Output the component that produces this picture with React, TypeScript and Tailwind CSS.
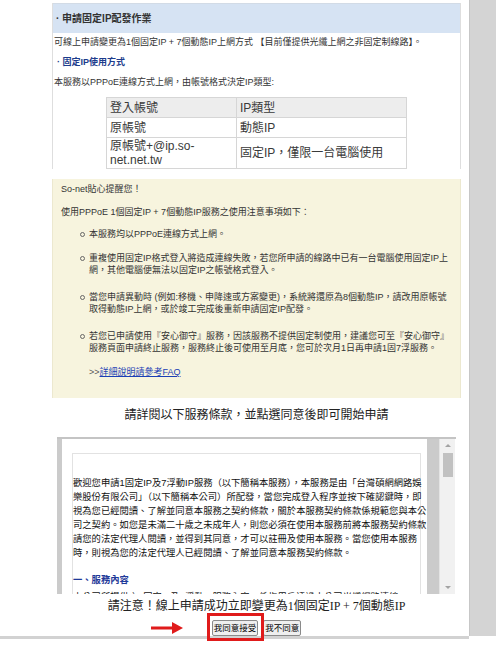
const sans = "font-['Liberation_Sans','Noto_Sans_CJK_TC',sans-serif]";
const serif = "font-['Liberation_Serif','Noto_Sans_CJK_TC',serif]";

const notices = [
  { text: ['本服務均以PPPoE連線方式上網。'], gap: 'mt-[10px]' },
  {
    text: [
      '重複使用固定IP格式登入將造成連線失敗，若您所申請的線路中已有一台電腦使用固定IP上',
      '網，其他電腦便無法以固定IP之帳號格式登入。',
    ],
    gap: 'mt-[12px]',
  },
  {
    text: [
      '當您申請異動時 (例如:移機、申降速或方案變更)，系統將還原為8個動態IP，請改用原帳號',
      '取得動態IP上網，或於竣工完成後重新申請固定IP配發。',
    ],
    gap: 'mt-[15px]',
  },
  {
    text: [
      '若您已申請使用『安心御守』服務，因該服務不提供固定制使用，建議您可至『安心御守』',
      '服務頁面申請終止服務，服務終止後可使用至月底，您可於次月1日再申請1固7浮服務。',
    ],
    gap: 'mt-[15px]',
  },
];

const terms = [
  '歡迎您申請1固定IP及7浮動IP服務（以下簡稱本服務），本服務是由「台灣碩網網路娛',
  '樂股份有限公司」（以下簡稱本公司）所配發，當您完成登入程序並按下確認鍵時，即',
  '視為您已經閱讀、了解並同意本服務之契約條款，關於本服務契約條款係規範您與本公',
  '司之契約。如您是未滿二十歲之未成年人，則您必須在使用本服務前將本服務契約條款',
  '請您的法定代理人閱讀，並得到其同意，才可以註冊及使用本服務。當您使用本服務',
  '時，則視為您的法定代理人已經閱讀、了解並同意本服務契約條款。',
];

function Lines({ lines }: { lines: string[] }) {
  return (
    <>
      {lines.map((l) => (
        <span key={l} className="block whitespace-nowrap">
          {l}
        </span>
      ))}
    </>
  );
}

export default function App() {
  return (
    <div className={`w-[496px] h-[664px] bg-white text-[#333] text-[9px] leading-[12px] ${sans}`}>
      <div className="flex h-[636px]">
        <div className="w-[469px] pt-[3px] pl-[52px] pr-[8px]">
          {/* application panel */}
          <section className="border-x border-[#dedede]">
            <div className="h-[30px] bg-[#d6e3f3] border-t border-[#d2dbe6] flex items-center pl-[3px] text-[10px] font-bold text-[#333]">
              · 申請固定IP配發作業
            </div>
            <p className="pl-[1px] pt-[3px] whitespace-nowrap">
              可線上申請變更為1個固定IP + 7個動態IP上網方式 【目前僅提供光纖上網之非固定制線路】。
            </p>
            <p className="pl-[4px] mt-[8px] font-bold text-[#1d3c8c]">· 固定IP使用方式</p>
            <p className="pl-[1px] mt-[8px]">本服務以PPPoE連線方式上網，由帳號格式決定IP類型:</p>
            <table className="ml-[53px] mt-[9px] mb-[10px] w-[301px] border-collapse border border-[#cfcfcf] text-[12px] leading-[14px] text-[#3a3a3a]">
              <tbody>
                <tr className="h-[20px] bg-[#ededed]">
                  <td className="w-[130px] border border-[#d6d6d6] pl-[3px]">登入帳號</td>
                  <td className="border border-[#d6d6d6] pl-[3px]">IP類型</td>
                </tr>
                <tr className="h-[20px]">
                  <td className="border border-[#d6d6d6] pl-[3px]">原帳號</td>
                  <td className="border border-[#d6d6d6] pl-[3px]">動態IP</td>
                </tr>
                <tr className="h-[31px]">
                  <td className="border border-[#d6d6d6] pl-[3px] break-all">
                    原帳號+@ip.so-
                    <br />
                    net.net.tw
                  </td>
                  <td className="border border-[#d6d6d6] pl-[3px]">固定IP，僅限一台電腦使用</td>
                </tr>
              </tbody>
            </table>
          </section>

          {/* reminder box */}
          <section className="bg-[#f7f4de] border-x border-[#ece8cf] pl-[8px] pt-[4px] pb-[20px]">
            <p>So-net貼心提醒您！</p>
            <p className="mt-[11px]">使用PPPoE 1個固定IP + 7個動態IP服務之使用注意事項如下：</p>
            <ul>
              {notices.map((n) => (
                <li key={n.text[0]} className={`${n.gap} flex`}>
                  <span className="w-[28px] flex justify-end pr-[4px] pt-[4px]">
                    <span className="block w-[5px] h-[5px] rounded-full border border-[#666]" />
                  </span>
                  <div>
                    <Lines lines={n.text} />
                  </div>
                </li>
              ))}
            </ul>
            <p className="mt-[12px] pl-[28px]">
              <span className="text-[#555]">&gt;&gt;</span>
              <a href="#faq" className="text-[#1a3fb5] underline">
                詳細說明請參考FAQ
              </a>
            </p>
          </section>

          <h2 className={`mt-[9px] text-center text-[12px] leading-[16px] text-[#222] ${serif}`}>
            請詳閱以下服務條款，並點選同意後即可開始申請
          </h2>

          {/* terms frame */}
          <div className="mx-[5px] mt-[14px] h-[157px] flex border-t-2 border-[#c4c4c4]">
            <div className="w-[5px] bg-[#cbcbcb]" />
            <div className="w-[365px] overflow-hidden pl-[10px] pr-[6px] pt-[14px]">
              <div className="h-full border border-b-0 border-[#e2e2e2] pt-[22px] text-[9.3px] leading-[14px] text-[#111]">
                <Lines lines={terms} />
                <p className="mt-[13px] font-bold text-[#1f3a99]">一、服務內容</p>
                <p className="mt-[3px] whitespace-nowrap">本公司所提供之1固定IP及7浮動IP服務內容，係指用戶透過本公司光纖網路連線，</p>
              </div>
            </div>
            <div className="w-[12px] bg-[#cbcbcb]" />
            <div className="w-[16px] bg-[#f1f1f1] border-l border-[#e4e4e4] flex flex-col items-center">
              <svg width="8" height="12" viewBox="0 0 8 12" className="mt-[1px]">
                <path d="M1 7 L4 4 L7 7 Z" fill="#a3a3a3" />
              </svg>
              <div className="w-[10px] h-[24px] bg-[#c1c1c1] mt-[1px]" />
              <div className="flex-1" />
              <svg width="8" height="12" viewBox="0 0 8 12" className="mb-[1px]">
                <path d="M1 5 L4 8 L7 5 Z" fill="#a3a3a3" />
              </svg>
            </div>
          </div>

          <p className={`mt-[6px] text-center text-[12px] leading-[12px] text-[#222] ${serif}`}>
            請注意！線上申請成功立即變更為1個固定IP + 7個動態IP
          </p>

          <div className="mt-[8px] flex justify-center gap-[5px]">
            <span className="relative">
              <svg width="32" height="12" viewBox="0 0 32 12" className="absolute left-[-61px] top-[2px]">
                <rect x="0" y="4.5" width="22" height="3" fill="#e01b1b" />
                <path d="M21 0 L32 6 L21 12 Z" fill="#e01b1b" />
              </svg>
              <button className="h-[16px] px-[1px] bg-[#efefef] border border-[#8a8a8a] rounded-[2px] text-[8.5px] leading-[12px] text-black">
                我同意接受
              </button>
              <span className="absolute left-[-5px] right-[-6px] top-[-7px] bottom-[-5px] border-[3px] border-[#e01b1b]" />
            </span>
            <button className="h-[16px] px-[1px] bg-[#efefef] border border-[#8a8a8a] rounded-[2px] text-[8.5px] leading-[12px] text-black">
              我不同意
            </button>
          </div>
        </div>
        <div className="flex-1 bg-[#d4d4d4] border-l border-[#c7c7c7]" />
      </div>
      <div className="w-[469px] h-[3px] bg-[#d2d2d2]" />
    </div>
  );
}
